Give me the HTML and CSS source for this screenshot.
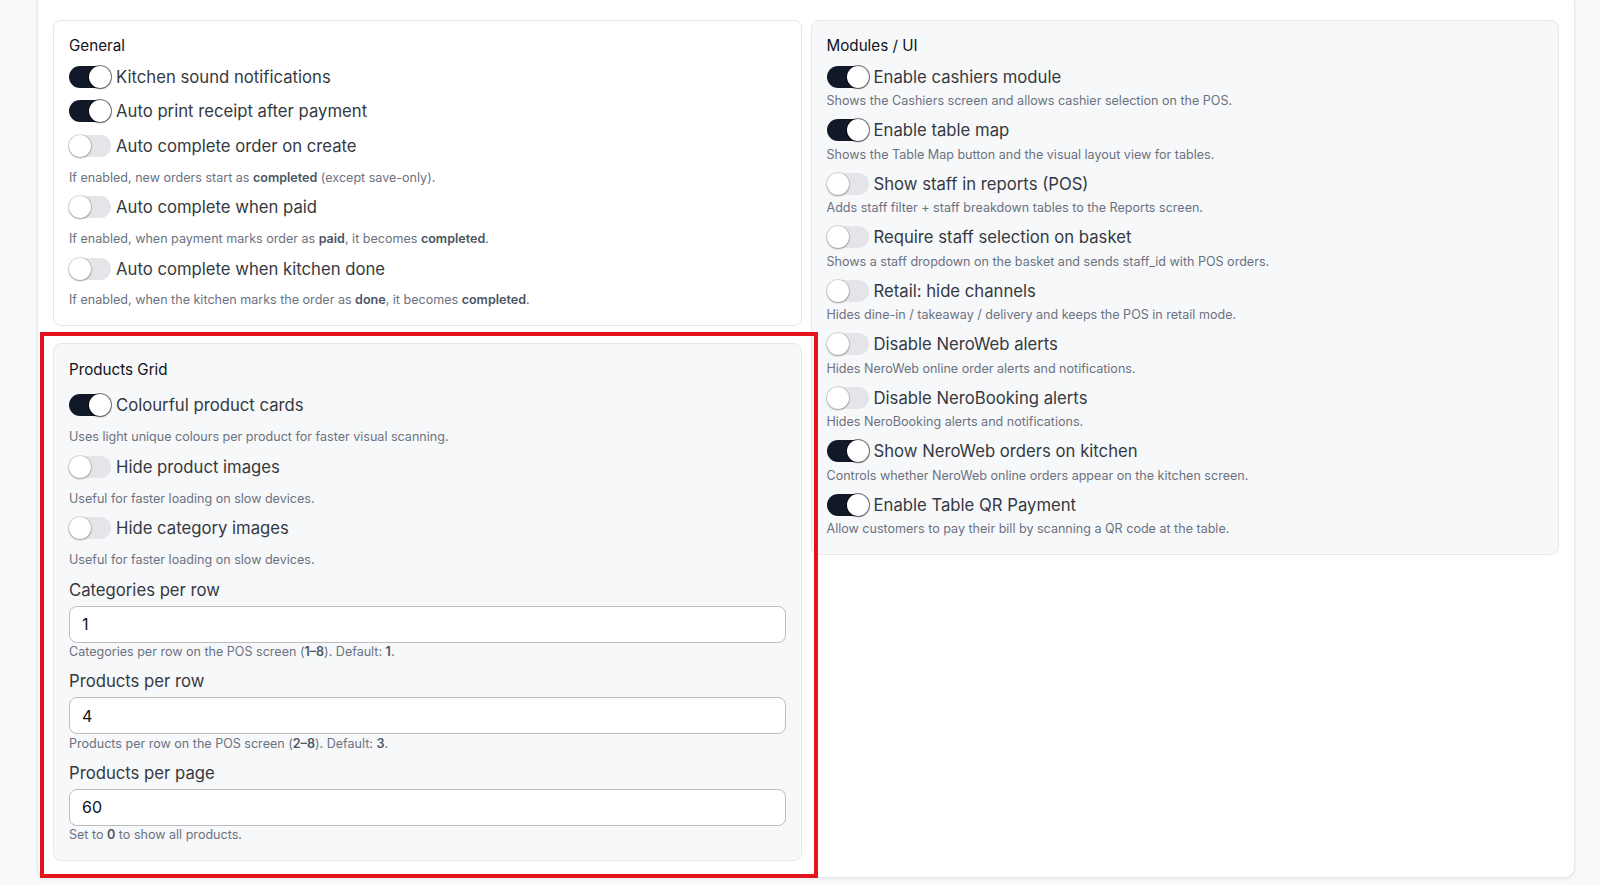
FILE: index.html
```html
<!DOCTYPE html>
<html lang="en">
<head>
<meta charset="utf-8">
<title>Settings</title>
<link rel="stylesheet" href="styles.css">
</head>
<body>
<div class="page">
  <div class="panel">
    <div class="grid">
      <div class="col">
        <section class="card card-white">
          <h3 class="card-title">General</h3>
          <label class="row"><span class="switch on"><span class="knob"></span></span><span class="row-label">Kitchen sound notifications</span></label>
          <label class="row"><span class="switch on"><span class="knob"></span></span><span class="row-label">Auto print receipt after payment</span></label>
          <label class="row"><span class="switch"><span class="knob"></span></span><span class="row-label">Auto complete order on create</span></label>
          <p class="desc">If enabled, new orders start as <b>completed</b> (except save-only).</p>
          <label class="row"><span class="switch"><span class="knob"></span></span><span class="row-label">Auto complete when paid</span></label>
          <p class="desc">If enabled, when payment marks order as <b>paid</b>, it becomes <b>completed</b>.</p>
          <label class="row"><span class="switch"><span class="knob"></span></span><span class="row-label">Auto complete when kitchen done</span></label>
          <p class="desc">If enabled, when the kitchen marks the order as <b>done</b>, it becomes <b>completed</b>.</p>
        </section>

        <section class="card card-grey card-products">
          <h3 class="card-title">Products Grid</h3>
          <label class="row"><span class="switch on"><span class="knob"></span></span><span class="row-label">Colourful product cards</span></label>
          <p class="desc">Uses light unique colours per product for faster visual scanning.</p>
          <label class="row"><span class="switch"><span class="knob"></span></span><span class="row-label">Hide product images</span></label>
          <p class="desc">Useful for faster loading on slow devices.</p>
          <label class="row"><span class="switch"><span class="knob"></span></span><span class="row-label">Hide category images</span></label>
          <p class="desc">Useful for faster loading on slow devices.</p>

          <div class="field">
            <div class="field-label">Categories per row</div>
            <input class="input" type="text" value="1">
            <div class="help">Categories per row on the POS screen (<b>1–8</b>). Default: <b>1</b>.</div>
          </div>
          <div class="field">
            <div class="field-label">Products per row</div>
            <input class="input" type="text" value="4">
            <div class="help">Products per row on the POS screen (<b>2–8</b>). Default: <b>3</b>.</div>
          </div>
          <div class="field">
            <div class="field-label">Products per page</div>
            <input class="input" type="text" value="60">
            <div class="help">Set to <b>0</b> to show all products.</div>
          </div>
        </section>
      </div>

      <div class="col">
        <section class="card card-grey card-modules">
          <h3 class="card-title">Modules / UI</h3>
          <label class="row"><span class="switch on"><span class="knob"></span></span><span class="row-label">Enable cashiers module</span></label>
          <p class="desc">Shows the Cashiers screen and allows cashier selection on the POS.</p>
          <label class="row"><span class="switch on"><span class="knob"></span></span><span class="row-label">Enable table map</span></label>
          <p class="desc">Shows the Table Map button and the visual layout view for tables.</p>
          <label class="row"><span class="switch"><span class="knob"></span></span><span class="row-label">Show staff in reports (POS)</span></label>
          <p class="desc">Adds staff filter + staff breakdown tables to the Reports screen.</p>
          <label class="row"><span class="switch"><span class="knob"></span></span><span class="row-label">Require staff selection on basket</span></label>
          <p class="desc">Shows a staff dropdown on the basket and sends staff_id with POS orders.</p>
          <label class="row"><span class="switch"><span class="knob"></span></span><span class="row-label">Retail: hide channels</span></label>
          <p class="desc">Hides dine-in / takeaway / delivery and keeps the POS in retail mode.</p>
          <label class="row"><span class="switch"><span class="knob"></span></span><span class="row-label">Disable NeroWeb alerts</span></label>
          <p class="desc">Hides NeroWeb online order alerts and notifications.</p>
          <label class="row"><span class="switch"><span class="knob"></span></span><span class="row-label">Disable NeroBooking alerts</span></label>
          <p class="desc">Hides NeroBooking alerts and notifications.</p>
          <label class="row"><span class="switch on"><span class="knob"></span></span><span class="row-label">Show NeroWeb orders on kitchen</span></label>
          <p class="desc">Controls whether NeroWeb online orders appear on the kitchen screen.</p>
          <label class="row"><span class="switch on"><span class="knob"></span></span><span class="row-label">Enable Table QR Payment</span></label>
          <p class="desc">Allow customers to pay their bill by scanning a QR code at the table.</p>
        </section>
      </div>
    </div>
  </div>
  <div class="highlight"></div>
</div>
</body>
</html>
```

FILE: styles.css
```css
* { box-sizing: border-box; }

html, body {
  margin: 0;
  padding: 0;
  background: #f8f9fb;
  font-family: Inter, "Noto Sans", "Liberation Sans", sans-serif;
  color: #374151;
}

.page {
  position: relative;
  padding: 0 25px 0 37px;
  height: 885px;
  overflow: hidden;
}

.panel {
  background: #ffffff;
  border: 1px solid #e4e7ec;
  border-top: none;
  border-radius: 0 0 10px 10px;
  box-shadow: 0 1px 3px rgba(16, 24, 40, 0.08);
  padding: 19.5px 15px 16px 15px;
  width: 1538px;
}

.grid {
  display: grid;
  grid-template-columns: 1fr 1fr;
  column-gap: 9px;
  align-items: start;
}

.col {
  display: flex;
  flex-direction: column;
  gap: 17px;
}

.card {
  border: 1px solid #e5e7eb;
  border-radius: 8px;
  padding: 15px 15px 16px 15px;
}

.card-white { background: #ffffff; }
.card-grey { background: #f7f8fa; }

.card-products { padding-top: 16px; padding-bottom: 17px; }

.card-title {
  margin: 0 0 9px 0;
  font-size: 15.2px;
  line-height: 20px;
  font-weight: 400;
  color: #111318;
}

.card-products .card-title { margin-bottom: 13px; }

.row {
  display: flex;
  align-items: center;
  gap: 5px;
  height: 24px;
  margin: 0 0 10.8px 0;
  cursor: pointer;
}

.card-modules .row { margin-bottom: 3.5px; }

.row-label {
  font-size: 16.7px;
  line-height: 24px;
  color: #353941;
}

.switch {
  position: relative;
  flex: 0 0 auto;
  width: 42px;
  height: 22px;
  border-radius: 11px;
  background: #e4e5e8;
}

.switch.on { background: #111827; }

.knob {
  position: absolute;
  top: 0;
  left: 0;
  width: 22px;
  height: 22px;
  border-radius: 50%;
  background: #ffffff;
  box-shadow: 0 0 0 1px rgba(0, 0, 0, 0.12), 0 1px 2px rgba(0, 0, 0, 0.3);
}

.switch.on .knob {
  left: 20px;
  box-shadow: 0 0 0 1px rgba(0, 0, 0, 0.5), 0 1px 2px rgba(0, 0, 0, 0.3);
}

.desc {
  margin: 0 0 8.5px 0;
  font-size: 12.55px;
  line-height: 18px;
  color: #6b7280;
}

.card-modules .desc { margin-bottom: 8px; }

.card .desc:last-child { margin-bottom: 0; }

.desc b, .help b {
  font-weight: 600;
  color: #4b5563;
}

.field { margin-top: 10px; }

.field-label {
  font-size: 16.7px;
  line-height: 22px;
  color: #353941;
  margin-bottom: 5px;
}

.input {
  display: block;
  width: 100%;
  height: 37px;
  border: 1px solid #bdbdbd;
  border-radius: 8px;
  background: #ffffff;
  padding: 0 12px;
  font-family: Inter, "Noto Sans", "Liberation Sans", sans-serif;
  font-size: 16px;
  color: #111318;
  outline: none;
}

.help {
  margin-top: 1.5px;
  font-size: 12.55px;
  line-height: 16px;
  color: #6b7280;
}

.highlight {
  position: absolute;
  left: 39.5px;
  top: 332px;
  width: 778.5px;
  height: 545.5px;
  border: 4px solid #e3141c;
  pointer-events: none;
}
```
